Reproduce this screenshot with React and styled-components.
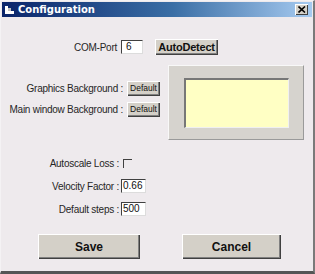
import React from 'react';
import styled, { createGlobalStyle } from 'styled-components';

const GlobalStyle = createGlobalStyle`
    html, body {
        margin: 0;
        padding: 0;
        background: #ffffff;
    }
    body {
        font-family: "Liberation Sans", Arial, sans-serif;
    }
`;

const Window = styled.div`
    width: 315px;
    height: 274px;
    box-sizing: border-box;
    background: #eeeaed;
    border-top: 1px solid #f4f2f4;
    border-left: 1px solid #f4f2f4;
    border-right: 2px solid #7a7a7a;
    border-bottom: 3px solid #555555;
    padding: 1px;
    display: flex;
    flex-direction: column;
`;

const TitleBar = styled.div`
    height: 15px;
    background: linear-gradient(90deg, #0a246a 0%, #3a6ea5 55%, #a6caf0 100%);
    display: flex;
    align-items: center;
    padding: 0 3px 0 3px;
    gap: 4px;
`;

const TitleIcon = styled.div`
    width: 9px;
    height: 8px;
    display: flex;
    align-items: center;
    justify-content: center;
`;

const TitleText = styled.span`
    flex: 1;
    color: #ffffff;
    font-size: 10px;
    font-weight: 700;
    font-family: "DejaVu Sans", Tahoma, sans-serif;
`;

const CloseBox = styled.div`
    width: 13px;
    height: 11px;
    background: #d4d0c8;
    box-shadow: inset 1px 1px 0 #ffffff, inset -1px -1px 0 #404040;
    display: flex;
    align-items: center;
    justify-content: center;
    margin-right: 1px;
`;

const Body = styled.div`
    flex: 1;
    display: flex;
    flex-direction: column;
`;

const ComRow = styled.div`
    display: flex;
    align-items: center;
    margin-top: 22px;
    padding-left: 72px;
    height: 16px;
`;

const Label = styled.span`
    font-size: 10px;
    color: #262626;
    white-space: nowrap;
    letter-spacing: -0.25px;
`;

const TextBox = styled.div`
    width: ${p => p.$w}px;
    height: 14px;
    box-sizing: border-box;
    background: #ffffff;
    border-top: 1px solid #404040;
    border-left: 1px solid #404040;
    border-right: 1px solid #dcdcdc;
    border-bottom: 1px solid #dcdcdc;
    font-size: 10px;
    line-height: 12px;
    padding-left: ${p => p.$pad || 1}px;
    color: #111;
    margin-left: ${p => p.$ml || 0}px;
    overflow: hidden;
`;

const Button = styled.div`
    box-sizing: border-box;
    width: ${p => p.$w}px;
    height: ${p => p.$h}px;
    background: #d4d0c8;
    box-shadow: inset 1px 1px 0 #ffffff, inset -1px -1px 0 #404040, inset -2px -2px 0 #808080;
    display: flex;
    align-items: center;
    justify-content: center;
    font-size: ${p => p.$fs}px;
    font-weight: ${p => (p.$bold ? 700 : 400)};
    letter-spacing: ${p => p.$ls || 0}px;
    color: #111;
    margin-left: ${p => p.$ml || 0}px;
    flex-shrink: 0;
    white-space: nowrap;
`;

const Middle = styled.div`
    display: flex;
    margin-top: 10px;
`;

const ColorCol = styled.div`
    width: 158px;
    display: flex;
    flex-direction: column;
    gap: 7px;
    padding-top: 16px;
`;

const ColorRow = styled.div`
    display: flex;
    justify-content: flex-end;
    align-items: center;
    gap: 4px;
    height: 14px;
`;

const Panel = styled.div`
    width: 136px;
    height: 75px;
    box-sizing: border-box;
    margin-left: 8px;
    background: #d6d3ce;
    border-top: 1px solid #f8f8f8;
    border-left: 1px solid #f8f8f8;
    border-right: 1px solid #9a9a9a;
    border-bottom: 1px solid #9a9a9a;
    padding: 12px 0 0 15px;
`;

const Preview = styled.div`
    width: 105px;
    height: 50px;
    box-sizing: border-box;
    background: #ffffc4;
    border-top: 2px solid #777777;
    border-left: 2px solid #777777;
    border-right: 1px solid #f0f0f0;
    border-bottom: 1px solid #f0f0f0;
`;

const Settings = styled.div`
    display: flex;
    flex-direction: column;
    margin-top: 16px;
    gap: 9px;
`;

const SettingRow = styled.div`
    display: flex;
    align-items: center;
    height: 14px;
`;

const SettingLabel = styled.div`
    width: 117px;
    text-align: right;
    font-size: 10px;
    color: #262626;
    white-space: nowrap;
    letter-spacing: -0.25px;
`;

const Check = styled.div`
    width: 9px;
    height: 9px;
    box-sizing: border-box;
    border-top: 1px solid #404040;
    border-left: 1px solid #404040;
    margin-left: 4px;
`;

const Actions = styled.div`
    display: flex;
    margin-top: 18px;
    padding-left: 36px;
    gap: 42px;
`;

export default function App() {
    return (
        <>
            <GlobalStyle />
            <Window>
                <TitleBar>
                    <TitleIcon>
                        <svg width="9" height="8" viewBox="0 0 9 8">
                            <rect x="0" y="0" width="3" height="5" fill="#ffffff" />
                            <rect x="0" y="5" width="9" height="3" fill="#ffffff" />
                            <rect x="3" y="2" width="3" height="3" fill="#c0c0c0" />
                        </svg>
                    </TitleIcon>
                    <TitleText>Configuration</TitleText>
                    <CloseBox>
                        <svg width="8" height="7" viewBox="0 0 8 7">
                            <path d="M0.5 0.5 L7 6.5 M7 0.5 L0.5 6.5" stroke="#000" strokeWidth="1.6" />
                        </svg>
                    </CloseBox>
                </TitleBar>
                <Body>
                    <ComRow>
                        <Label>COM-Port</Label>
                        <TextBox $w={22} $ml={4} $pad={4}>6</TextBox>
                        <Button $w={63} $h={16} $fs={11} $ls={-0.2} $bold $ml={12}>AutoDetect</Button>
                    </ComRow>
                    <Middle>
                        <ColorCol>
                            <ColorRow>
                                <Label>Graphics Background :</Label>
                                <Button $w={33} $h={15} $fs={8.5}>Default</Button>
                            </ColorRow>
                            <ColorRow>
                                <Label>Main window Background :</Label>
                                <Button $w={33} $h={15} $fs={8.5}>Default</Button>
                            </ColorRow>
                        </ColorCol>
                        <Panel>
                            <Preview />
                        </Panel>
                    </Middle>
                    <Settings>
                        <SettingRow>
                            <SettingLabel>Autoscale Loss :</SettingLabel>
                            <Check />
                        </SettingRow>
                        <SettingRow>
                            <SettingLabel>Velocity Factor :</SettingLabel>
                            <TextBox $w={25} $ml={2}>0.66</TextBox>
                        </SettingRow>
                        <SettingRow>
                            <SettingLabel>Default steps :</SettingLabel>
                            <TextBox $w={25} $ml={2}>500</TextBox>
                        </SettingRow>
                    </Settings>
                    <Actions>
                        <Button $w={102} $h={25} $fs={12} $bold>Save</Button>
                        <Button $w={99} $h={25} $fs={12} $bold>Cancel</Button>
                    </Actions>
                </Body>
            </Window>
        </>
    );
}
